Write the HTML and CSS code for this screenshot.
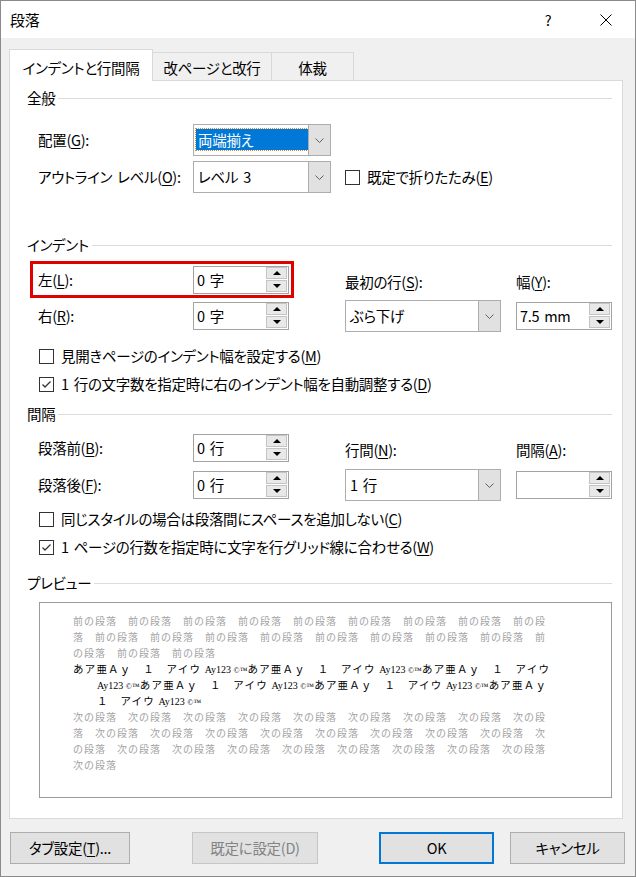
FILE: index.html
```html
<!DOCTYPE html>
<html lang="ja">
<head>
  <meta charset="UTF-8">
  <title>段落</title>
  <link rel="stylesheet" href="styles.css">
</head>
<body>

  <div class="window">
    <div class="titlebar">
      <span class="title">段落</span>
      <span class="caption-btn">?</span>
      <span class="caption-btn">
        <svg width="12" height="12" viewBox="0 0 12 12"><path d="M0.5 0.5L11.5 11.5M11.5 0.5L0.5 11.5" stroke="#000" stroke-width="1"/></svg>
      </span>
    </div>

    <div class="tabs">
      <div class="tab tab-active">インデントと行間隔</div>
      <div class="tab tab-break">改ページと改行</div>
      <div class="tab tab-style">体裁</div>
    </div>

    <div class="panel">
      <!-- 全般 -->
      <div class="group-head">全般</div>
      <div class="fields general">
        <div class="label">配置(<u>G</u>):</div>
        <div class="select sel-short">
          <div class="sel-text focused">両端揃え</div>
          <div class="sel-btn"><svg width="9" height="5" viewBox="0 0 9 5"><polyline points="0.5,0.5 4.5,4.5 8.5,0.5" fill="none" stroke="#606060"/></svg></div>
        </div>
        <div></div><div></div>

        <div class="label">アウトライン レベル(<u>O</u>):</div>
        <div class="select sel-short">
          <div class="sel-text">レベル 3</div>
          <div class="sel-btn"><svg width="9" height="5" viewBox="0 0 9 5"><polyline points="0.5,0.5 4.5,4.5 8.5,0.5" fill="none" stroke="#606060"/></svg></div>
        </div>
        <label class="check check-inline span2"><span class="box"></span><span>既定で折りたたみ(<u>E</u>)</span></label>
      </div>

      <!-- インデント -->
      <div class="group-head indent-head">インデント</div>
      <div class="fields indent">
        <div class="label">左(<u>L</u>):</div>
        <div class="spin">
          <div class="spin-val">0 字</div>
          <div class="spin-btns"><span class="spin-btn up"></span><span class="spin-btn down"></span></div>
        </div>
        <div class="label">最初の行(<u>S</u>):</div>
        <div class="label">幅(<u>Y</u>):</div>

        <div class="label">右(<u>R</u>):</div>
        <div class="spin">
          <div class="spin-val">0 字</div>
          <div class="spin-btns"><span class="spin-btn up"></span><span class="spin-btn down"></span></div>
        </div>
        <div class="select sel-long">
          <div class="sel-text">ぶら下げ</div>
          <div class="sel-btn"><svg width="9" height="5" viewBox="0 0 9 5"><polyline points="0.5,0.5 4.5,4.5 8.5,0.5" fill="none" stroke="#606060"/></svg></div>
        </div>
        <div class="spin">
          <div class="spin-val">7.5 mm</div>
          <div class="spin-btns"><span class="spin-btn up"></span><span class="spin-btn down"></span></div>
        </div>
      </div>
      <div class="checks indent-checks">
        <label class="check"><span class="box"></span><span>見開きページのインデント幅を設定する(<u>M</u>)</span></label>
        <label class="check"><span class="box checked"><svg width="13" height="13" viewBox="0 0 13 13"><polyline points="2.5,6.5 5,9 10.5,3.5" fill="none" stroke="#333" stroke-width="1.3"/></svg></span><span>1 行の文字数を指定時に右のインデント幅を自動調整する(<u>D</u>)</span></label>
      </div>

      <!-- 間隔 -->
      <div class="group-head spacing-head">間隔</div>
      <div class="fields spacing">
        <div class="label">段落前(<u>B</u>):</div>
        <div class="spin">
          <div class="spin-val">0 行</div>
          <div class="spin-btns"><span class="spin-btn up"></span><span class="spin-btn down"></span></div>
        </div>
        <div class="label">行間(<u>N</u>):</div>
        <div class="label">間隔(<u>A</u>):</div>

        <div class="label">段落後(<u>F</u>):</div>
        <div class="spin">
          <div class="spin-val">0 行</div>
          <div class="spin-btns"><span class="spin-btn up"></span><span class="spin-btn down"></span></div>
        </div>
        <div class="select sel-long">
          <div class="sel-text">1 行</div>
          <div class="sel-btn"><svg width="9" height="5" viewBox="0 0 9 5"><polyline points="0.5,0.5 4.5,4.5 8.5,0.5" fill="none" stroke="#606060"/></svg></div>
        </div>
        <div class="spin">
          <div class="spin-val"></div>
          <div class="spin-btns"><span class="spin-btn up"></span><span class="spin-btn down"></span></div>
        </div>
      </div>
      <div class="checks spacing-checks">
        <label class="check"><span class="box"></span><span>同じスタイルの場合は段落間にスペースを追加しない(<u>C</u>)</span></label>
        <label class="check"><span class="box checked"><svg width="13" height="13" viewBox="0 0 13 13"><polyline points="2.5,6.5 5,9 10.5,3.5" fill="none" stroke="#333" stroke-width="1.3"/></svg></span><span>1 ページの行数を指定時に文字を行グリッド線に合わせる(<u>W</u>)</span></label>
      </div>

      <!-- プレビュー -->
      <div class="group-head preview-head">プレビュー</div>
      <div class="preview">
        <div class="pv-line">前の段落　前の段落　前の段落　前の段落　前の段落　前の段落　前の段落　前の段落　前の段</div>
        <div class="pv-line">落　前の段落　前の段落　前の段落　前の段落　前の段落　前の段落　前の段落　前の段落　前</div>
        <div class="pv-line">の段落　前の段落　前の段落</div>
        <div class="pv-line pv-cur">あア亜Ａｙ　１　アイウ <span class="lat">Ay123 <small>©™</small></span>あア亜Ａｙ　１　アイウ <span class="lat">Ay123 <small>©™</small></span>あア亜Ａｙ　１　アイウ</div>
        <div class="pv-line pv-cur pv-indent"><span class="lat">Ay123 <small>©™</small></span>あア亜Ａｙ　１　アイウ <span class="lat">Ay123 <small>©™</small></span>あア亜Ａｙ　１　アイウ <span class="lat">Ay123 <small>©™</small></span>あア亜Ａｙ</div>
        <div class="pv-line pv-cur pv-indent">１　アイウ <span class="lat">Ay123 <small>©™</small></span></div>
        <div class="pv-line">次の段落　次の段落　次の段落　次の段落　次の段落　次の段落　次の段落　次の段落　次の段</div>
        <div class="pv-line">落　次の段落　次の段落　次の段落　次の段落　次の段落　次の段落　次の段落　次の段落　次</div>
        <div class="pv-line">の段落　次の段落　次の段落　次の段落　次の段落　次の段落　次の段落　次の段落　次の段落</div>
        <div class="pv-line">次の段落</div>
      </div>

      <!-- highlight drawn over the 左 row -->
      <div class="marker"></div>
    </div>

    <div class="buttons">
      <div class="btn btn-tabs">タブ設定(<u>T</u>)...</div>
      <div class="btn btn-default disabled">既定に設定(D)</div>
      <div class="btn btn-ok">OK</div>
      <div class="btn btn-cancel">キャンセル</div>
    </div>
  </div>

</body>
</html>
```

FILE: styles.css
```css
* {
  box-sizing: border-box;
}

body {
  margin: 0;
  font-family: "Noto Sans CJK JP", "Noto Sans", sans-serif;
  font-size: 14.5px;
  line-height: 20px;
  letter-spacing: -0.3px;
  word-spacing: 2px;
  color: #000;
  font-feature-settings: "palt";
}

u {
  text-underline-offset: 2px;
}

.window {
  width: 636px;
  height: 877px;
  border: 1px solid #8a8a8a;
  background: #f0f0f0;
  display: flex;
  flex-direction: column;
}

.titlebar {
  height: 37px;
  flex-shrink: 0;
  background: #fff;
  display: flex;
  align-items: center;
  padding-left: 9px;
}

.title {
  flex: 1;
  font-size: 15px;
}

.caption-btn {
  width: 58px;
  height: 37px;
  display: flex;
  align-items: center;
  justify-content: center;
}

/* tabs */
.tabs {
  display: flex;
  align-items: flex-end;
  height: 31px;
  margin-top: 11px;
  padding-left: 8px;
  flex-shrink: 0;
}

.tab {
  height: 28px;
  margin-left: -1px;
  padding-top: 3px;
  border: 1px solid #d9d9d9;
  border-bottom: none;
  background: #f0f0f0;
  display: flex;
  align-items: center;
  justify-content: center;
}

.tab-active {
  width: 144px;
  height: 32px;
  margin-left: 0;
  margin-bottom: -1px;
  padding-top: 5px;
  background: #fff;
  position: relative;
  z-index: 1;
}

.tab-break {
  width: 120px;
}

.tab-style {
  width: 83px;
}

/* panel */
.panel {
  position: relative;
  width: 614px;
  height: 739px;
  margin-left: 8px;
  padding: 7px 10px 0 17px;
  background: #fff;
  border: 1px solid #d9d9d9;
  flex-shrink: 0;
}

.group-head {
  display: flex;
  align-items: center;
  height: 20px;
  gap: 3px;
}

.group-head::after {
  content: "";
  flex: 1;
  height: 1px;
  background: #dcdcdc;
}

.indent-head {
  margin-top: 42px;
}

.spacing-head {
  margin-top: 6px;
}

.preview-head {
  margin-top: 12px;
}

.fields {
  display: grid;
  grid-template-columns: 155px 152px 171px 95px;
  grid-auto-rows: 32px;
  row-gap: 5px;
  align-items: center;
  margin-left: 11px;
}

.general {
  margin-top: 16px;
}

.indent {
  margin-top: 9px;
  row-gap: 4px;
}

.spacing {
  margin-top: 8px;
}

.label {
  white-space: nowrap;
}

.fields > .label:nth-child(4n+3),
.fields > .label:nth-child(4n+4) {
  padding-top: 3px;
}

.span2 {
  grid-column: span 2;
}

/* drop-down */
.select {
  height: 32px;
  display: flex;
  border: 1px solid #adadad;
  background: #fff;
}

.sel-short {
  width: 138px;
}

.sel-long {
  width: 156px;
}

.sel-text {
  flex: 1;
  display: flex;
  align-items: center;
  padding-left: 4px;
  white-space: nowrap;
}

.sel-text.focused {
  margin: 4px 0 5px 2px;
  padding-left: 2px;
  background: #0078d7;
  color: #fff;
  outline: 1px dotted #d08a3c;
}

.sel-btn {
  width: 22px;
  display: flex;
  align-items: center;
  justify-content: center;
  background: #e1e1e1;
  border-left: 1px solid #adadad;
}

/* spin box */
.spin {
  width: 96px;
  height: 28px;
  display: flex;
  border: 1px solid #a3a3a3;
  background: #fff;
}

.spin-val {
  flex: 1;
  display: flex;
  align-items: center;
  padding-left: 3px;
  white-space: pre;
}

.spin-btns {
  width: 22px;
  display: flex;
  flex-direction: column;
  gap: 1px;
  padding: 0 1px 1px 0;
}

.spin-btn {
  flex: 1;
  display: flex;
  align-items: center;
  justify-content: center;
  background: #e8e8e8;
  border: 1px solid #c4c4c4;
}

.up::before {
  content: "";
  border-left: 4px solid transparent;
  border-right: 4px solid transparent;
  border-bottom: 4px solid #000;
}

.down::before {
  content: "";
  border-left: 4px solid transparent;
  border-right: 4px solid transparent;
  border-top: 4px solid #000;
}

/* check boxes */
.checks {
  margin-left: 12px;
}

.indent-checks {
  margin-top: 10px;
}

.spacing-checks {
  margin-top: 4px;
}

.check {
  display: flex;
  align-items: center;
  gap: 7px;
  height: 28px;
  white-space: nowrap;
}

.box {
  width: 15px;
  height: 15px;
  border: 1px solid #333;
  background: #fff;
  display: flex;
  align-items: center;
  justify-content: center;
  flex-shrink: 0;
}

/* preview */
.preview {
  width: 573px;
  height: 196px;
  margin: 9px 0 0 12px;
  padding: 10px 0 0 33px;
  border: 1px solid #9a9a9a;
  background: #fff;
  font-feature-settings: normal;
  word-spacing: 0;
  white-space: nowrap;
}

.pv-line {
  height: 16px;
  line-height: 16px;
  font-size: 10px;
  letter-spacing: 1px;
  color: #a3a3a3;
}

.pv-cur {
  font-size: 10.5px;
  letter-spacing: 1.2px;
  color: #000;
}

.pv-indent {
  padding-left: 24px;
}

.lat {
  font-family: "Liberation Serif", serif;
  font-size: 10px;
  letter-spacing: 0;
}

.lat small {
  font-size: 8px;
}

.marker {
  position: absolute;
  left: 20px;
  top: 180px;
  width: 264px;
  height: 37px;
  border: 3px solid #e00000;
}

/* bottom buttons */
.buttons {
  display: flex;
  margin-top: 13px;
  padding-left: 9px;
}

.btn {
  height: 32px;
  display: flex;
  align-items: center;
  justify-content: center;
  background: #e1e1e1;
  border: 1px solid #adadad;
  white-space: nowrap;
}

.btn-tabs {
  width: 120px;
}

.btn-default {
  width: 126px;
  margin-left: 62px;
}

.btn-ok {
  width: 115px;
  margin-left: 61px;
  border: 2px solid #0078d7;
}

.btn-cancel {
  width: 115px;
  margin-left: 16px;
}

.disabled {
  color: #838383;
  border-color: #c6c6c6;
}
```
